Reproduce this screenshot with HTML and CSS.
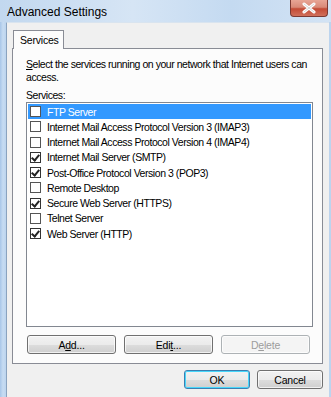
FILE: index.html
```html
<!DOCTYPE html>
<html lang="en">

<head>
	<meta charset="UTF-8">
	<title>Advanced Settings</title>
	<link rel="stylesheet" href="styles.css">
</head>

<body>
	<div class="window">
		<div class="titlebar">
			<span class="title">Advanced Settings</span>
			<div class="close">
				<svg width="16" height="12" viewBox="0 0 16 12">
					<path d="M3 2 L13 10 M13 2 L3 10" stroke="#fff" stroke-width="3" stroke-linecap="round" />
					<path d="M3 2 L13 10 M13 2 L3 10" stroke="#b9b9b9" stroke-width="1" stroke-linecap="round" opacity="0.6" />
				</svg>
			</div>
		</div>
		<div class="client">
			<div class="tabs">
				<div class="tab">Services</div>
			</div>
			<div class="panel">
				<p class="intro"><u>S</u>elect the services running on your network that Internet users can access.</p>
				<p class="label">Services:</p>
				<div class="listbox">
					<div class="row selected"><span class="check"></span>FTP Server</div>
					<div class="row"><span class="check"></span>Internet Mail Access Protocol Version 3 (IMAP3)</div>
					<div class="row"><span class="check"></span>Internet Mail Access Protocol Version 4 (IMAP4)</div>
					<div class="row"><span class="check on"></span>Internet Mail Server (SMTP)</div>
					<div class="row"><span class="check on"></span>Post-Office Protocol Version 3 (POP3)</div>
					<div class="row"><span class="check"></span>Remote Desktop</div>
					<div class="row"><span class="check on"></span>Secure Web Server (HTTPS)</div>
					<div class="row"><span class="check"></span>Telnet Server</div>
					<div class="row"><span class="check on"></span>Web Server (HTTP)</div>
				</div>
				<div class="actions">
					<button class="btn">A<u>d</u>d...</button>
					<button class="btn">Edi<u>t</u>...</button>
					<button class="btn disabled">D<u>e</u>lete</button>
				</div>
			</div>
			<div class="footer">
				<button class="btn default">OK</button>
				<button class="btn">Cancel</button>
			</div>
		</div>
	</div>
</body>

</html>
```

FILE: styles.css
```css
body {
	margin: 0px;
	padding: 0px;
	overflow: hidden;
	font-family: "Liberation Sans", Arial, sans-serif;
	font-size: 10.5px;
	letter-spacing: -0.45px;
	color: #000;
}
.window {
	width: 331px;
	height: 397px;
	display: flex;
	flex-direction: column;
	background: linear-gradient(to right, #a8c6e8 0px, #c7dcf2 3px, #bcd4ee 6px, #bcd4ee 100%);
}
.titlebar {
	height: 22px;
	flex: none;
	display: flex;
	align-items: flex-start;
	justify-content: space-between;
	background: linear-gradient(to right, #c2d8ef, #d6e5f5 40%, #c4daf1 70%, #d3e3f4);
}
.title {
	font-size: 12px;
	letter-spacing: 0;
	margin: 5px 0 0 7px;
	color: #000;
}
.close {
	width: 38px;
	height: 17px;
	margin-right: 3px;
	border: 1px solid #7c3a33;
	border-top: none;
	border-radius: 0 0 4px 4px;
	background: linear-gradient(to bottom, #e8a595 0%, #d98a78 45%, #c44b35 55%, #d0705c 100%);
	display: flex;
	align-items: center;
	justify-content: center;
	box-sizing: border-box;
}
.client {
	flex: 1;
	margin: 0 2px 0 6px;
	background-color: #f0f0f0;
	border-left: 1px solid #8aa3bf;
	border-top: 1px solid #d9e4ef;
	padding: 6px 6px 0 5px;
	display: flex;
	flex-direction: column;
}
.tabs {
	display: flex;
	height: 19px;
	padding-left: 1px;
}
.tab {
	background: #fcfcfc;
	border: 1px solid #898c95;
	border-bottom: none;
	padding: 3px 6px 0 6px;
	width: 37px;
	letter-spacing: -0.2px;
	position: relative;
	top: 1px;
	z-index: 1;
}
.panel {
	height: 305px;
	background: #fcfcfc;
	border: 1px solid #898c95;
	padding: 9px 4px 0 13px;
	display: flex;
	flex-direction: column;
}
.intro {
	margin: 0;
	line-height: 13px;
}
.label {
	margin: 5px 0 0 0;
	line-height: 13px;
}
.listbox {
	height: 221px;
	width: 283px;
	background: #fff;
	border: 1px solid #828790;
	padding: 1px;
}
.row {
	height: 15.25px;
	display: flex;
	align-items: center;
	white-space: nowrap;
	padding-left: 2px;
}
.row.selected {
	background-color: #3399ff;
	color: #fff;
}
.check {
	width: 9px;
	height: 9px;
	border: 1px solid #555;
	background: #fff;
	margin-right: 6px;
	position: relative;
}
.check.on {
	border-color: #333;
}
.check.on::after {
	content: "";
	position: absolute;
	left: 2px;
	top: 0px;
	width: 3px;
	height: 6px;
	border: solid #222;
	border-width: 0 2px 2px 0;
	transform: rotate(40deg);
}
.actions {
	display: flex;
	gap: 8px;
	margin-top: 8px;
	padding-left: 1px;
}
.btn {
	font-family: "Liberation Sans", Arial, sans-serif;
	font-size: 10.5px;
	letter-spacing: -0.2px;
	color: #000;
	height: 19px;
	width: 89px;
	padding: 0;
	border: 1px solid #707070;
	border-radius: 3px;
	background: linear-gradient(to bottom, #f2f2f2 0%, #ebebeb 50%, #dddddd 51%, #cfcfcf 100%);
	box-shadow: inset 0 0 0 1px rgba(255, 255, 255, 0.7);
}
.btn.disabled {
	color: #9c9c9c;
	border-color: #adb2b5;
	background: #f4f4f4;
}
.footer {
	display: flex;
	justify-content: flex-end;
	gap: 7px;
	margin-top: 6px;
}
.footer .btn {
	width: 66px;
	height: 19px;
}
.footer .btn.default {
	border-color: #3c7fb1;
	box-shadow: inset 0 0 0 1px #48d7fb;
}
```
